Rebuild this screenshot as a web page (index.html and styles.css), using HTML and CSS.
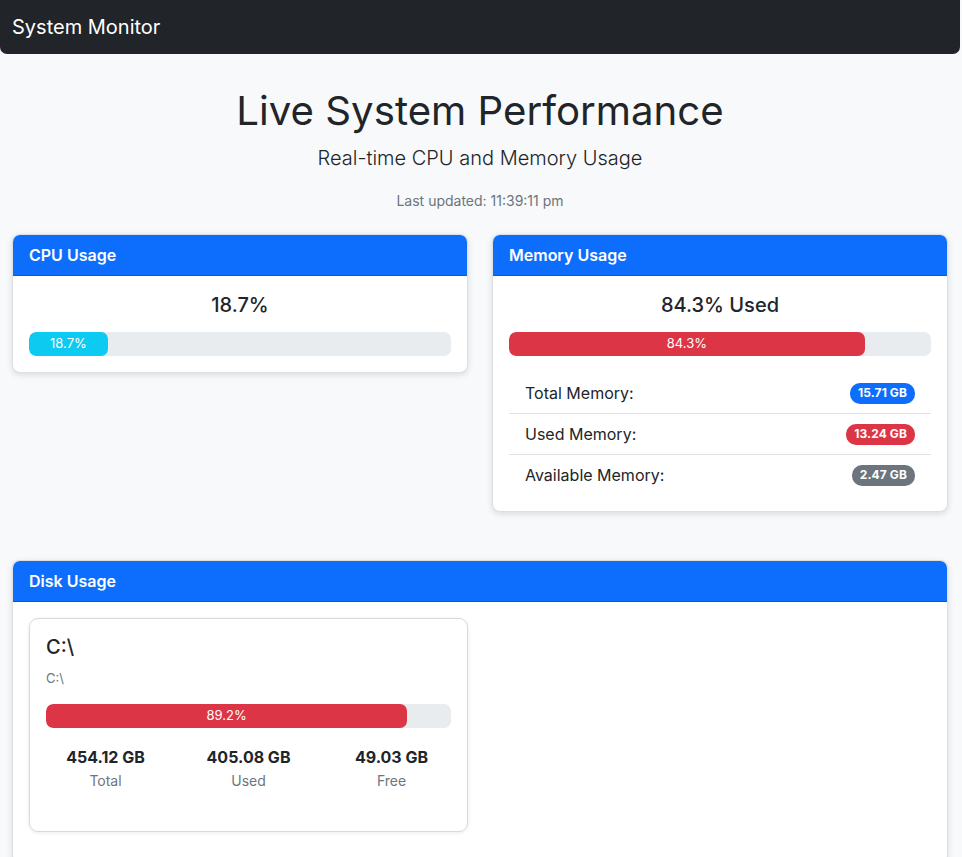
FILE: index.html
```html
<!DOCTYPE html>
<html lang="en">
<head>
<meta charset="utf-8">
<title>System Monitor</title>
<link rel="stylesheet" href="styles.css">
</head>
<body>
<div class="page">
  <nav class="navbar"><span class="brand">System Monitor</span></nav>
  <main class="main">
    <header class="hero">
      <h1 class="title">Live System Performance</h1>
      <p class="lead">Real-time CPU and Memory Usage</p>
      <p class="updated">Last updated: 11:39:11 pm</p>
    </header>

    <section class="row-two">
      <div class="card">
        <div class="card-header">CPU Usage</div>
        <div class="card-body">
          <div class="big-value">18.7%</div>
          <div class="progress"><div class="bar bar-info" style="width:18.7%">18.7%</div></div>
        </div>
      </div>
      <div class="card">
        <div class="card-header">Memory Usage</div>
        <div class="card-body">
          <div class="big-value">84.3% Used</div>
          <div class="progress"><div class="bar bar-danger" style="width:84.3%">84.3%</div></div>
          <ul class="list">
            <li class="list-item"><span>Total Memory:</span><span class="badge badge-primary">15.71 GB</span></li>
            <li class="list-item"><span>Used Memory:</span><span class="badge badge-danger">13.24 GB</span></li>
            <li class="list-item"><span>Available Memory:</span><span class="badge badge-secondary">2.47 GB</span></li>
          </ul>
        </div>
      </div>
    </section>

    <section class="card disk-card">
      <div class="card-header">Disk Usage</div>
      <div class="card-body disk-body">
        <div class="disk-grid">
          <div class="disk">
            <div class="disk-title">C:\</div>
            <div class="disk-sub">C:\</div>
            <div class="progress"><div class="bar bar-danger" style="width:89.2%">89.2%</div></div>
            <div class="stats">
              <div class="stat"><div class="stat-val">454.12 GB</div><div class="stat-lbl">Total</div></div>
              <div class="stat"><div class="stat-val">405.08 GB</div><div class="stat-lbl">Used</div></div>
              <div class="stat"><div class="stat-val">49.03 GB</div><div class="stat-lbl">Free</div></div>
            </div>
          </div>
        </div>
      </div>
    </section>
  </main>
</div>
</body>
</html>
```

FILE: styles.css
```css
* { box-sizing: border-box; }
html, body { margin: 0; padding: 0; }
body {
  background: #f8f9fa;
  font-family: Inter, "Noto Sans", sans-serif;
  color: #212529;
  font-size: 16px;
  line-height: 1.5;
}
.page { width: 960px; }
.navbar {
  background: #212529;
  height: 54px;
  display: flex;
  align-items: center;
  padding: 0 12px;
  border-radius: 0 0 7px 7px;
}
.brand { color: #fff; font-size: 20px; line-height: 30px; }

.main { padding: 0 12px; }
.hero { text-align: center; padding-top: 33px; }
.title { margin: 0; font-size: 40.2px; font-weight: 400; line-height: 48px; }
.lead { margin: 8px 0 0; font-size: 20px; font-weight: 300; line-height: 30px; }
.updated { margin: 17px 0 0; font-size: 14px; line-height: 21px; color: #6c757d; }

.row-two {
  display: grid;
  grid-template-columns: 1fr 1fr;
  column-gap: 24px;
  align-items: start;
  margin-top: 23px;
}
.card {
  background: #fff;
  border: 1px solid rgba(0,0,0,0.125);
  border-radius: 8px;
  box-shadow: 0 2px 6px rgba(0,0,0,0.12);
  overflow: hidden;
}
.card-header {
  background: #0d6efd;
  color: #fff;
  font-weight: 600;
  font-size: 16px;
  line-height: 24px;
  padding: 8px 16px;
  border-bottom: 1px solid rgba(0,0,0,0.175);
}
.card-body { padding: 16px; }
.big-value { text-align: center; font-size: 20px; line-height: 24px; font-weight: 500; margin-top: 1px; margin-bottom: 15px; }
.progress {
  height: 24px;
  background: #e9ecef;
  border-radius: 7px;
  overflow: hidden;
  display: flex;
}
.bar {
  color: #fff;
  font-size: 13px;
  display: flex;
  align-items: center;
  justify-content: center;
  border-radius: 7px;
}
.bar-info { background: #0dcaf0; }
.bar-danger { background: #dc3545; }

.list { list-style: none; margin: 17px 0 0; padding: 0; }
.list-item {
  display: flex;
  justify-content: space-between;
  align-items: center;
  padding: 8px 16px;
  border-bottom: 1px solid #dee2e6;
  font-size: 16px;
  line-height: 24px;
}
.list-item:last-child { border-bottom: none; }
.badge {
  color: #fff;
  font-size: 12px;
  font-weight: 700;
  line-height: 1;
  padding: 4px 8px 5px;
  border-radius: 10px;
  letter-spacing: 0.1px;
}
.badge-primary { background: #0d6efd; }
.badge-danger { background: #dc3545; }
.badge-secondary { background: #6c757d; }

.disk-card { margin-top: 48px; }
.disk-body { min-height: 260px; }
.disk-grid { display: grid; grid-template-columns: 1fr 1fr; column-gap: 24px; }
.disk {
  border: 1px solid rgba(0,0,0,0.15);
  border-radius: 9px;
  box-shadow: 0 1px 4px rgba(0,0,0,0.08);
  padding: 16px 16px 39px;
}
.disk-title { font-size: 20px; font-weight: 500; line-height: 24px; margin-top: 0; }
.disk-sub { font-size: 13px; color: #6c757d; margin-top: 9px; line-height: 20px; }
.disk .progress { margin-top: 16px; }
.stats {
  display: grid;
  grid-template-columns: 1fr 1fr 1fr;
  margin: 17px -12px 0;
  text-align: center;
}
.stat-val { font-weight: 700; font-size: 16px; line-height: 24px; }
.stat-lbl { font-size: 14px; color: #6c757d; line-height: 22px; padding-top: 1px; }
```
